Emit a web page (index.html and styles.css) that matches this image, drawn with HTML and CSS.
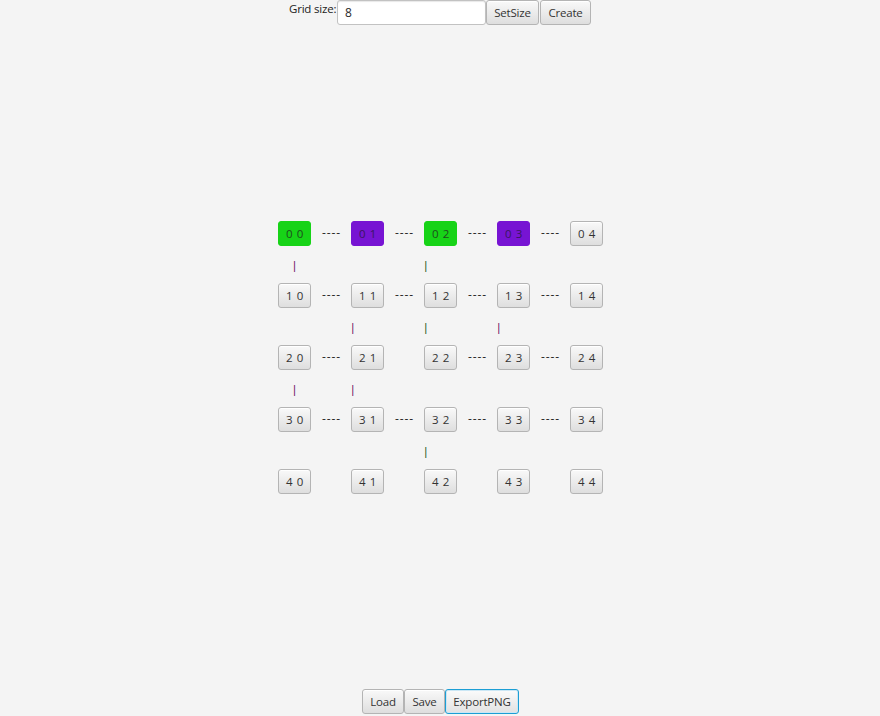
FILE: index.html
```html
<!DOCTYPE html>
<html>
<head>
<meta charset="utf-8">
<link rel="stylesheet" href="styles.css">
</head>
<body>
<div class="app">
  <div class="topbar">
    <span class="lbl">Grid size:</span>
    <div class="field">8</div>
    <button class="btn setsize">SetSize</button>
    <button class="btn create">Create</button>
  </div>
  <div class="center">
    <div class="board">
      <!-- row 0 -->
      <button class="btn cell green">0 0</button><span class="dash">----</span>
      <button class="btn cell purple">0 1</button><span class="dash">----</span>
      <button class="btn cell green">0 2</button><span class="dash">----</span>
      <button class="btn cell purple">0 3</button><span class="dash">----</span>
      <button class="btn cell">0 4</button>
      <!-- bars 0-1 -->
      <span class="bar first pur">|</span><span></span>
      <span></span><span></span>
      <span class="bar grn">|</span><span></span>
      <span></span><span></span>
      <span></span>
      <!-- row 1 -->
      <button class="btn cell">1 0</button><span class="dash">----</span>
      <button class="btn cell">1 1</button><span class="dash">----</span>
      <button class="btn cell">1 2</button><span class="dash">----</span>
      <button class="btn cell">1 3</button><span class="dash">----</span>
      <button class="btn cell">1 4</button>
      <!-- bars 1-2 -->
      <span></span><span></span>
      <span class="bar pur">|</span><span></span>
      <span class="bar grn">|</span><span></span>
      <span class="bar pur">|</span><span></span>
      <span></span>
      <!-- row 2 -->
      <button class="btn cell">2 0</button><span class="dash">----</span>
      <button class="btn cell">2 1</button><span></span>
      <button class="btn cell">2 2</button><span class="dash">----</span>
      <button class="btn cell">2 3</button><span class="dash">----</span>
      <button class="btn cell">2 4</button>
      <!-- bars 2-3 -->
      <span class="bar first pur">|</span><span></span>
      <span class="bar pur">|</span><span></span>
      <span></span><span></span>
      <span></span><span></span>
      <span></span>
      <!-- row 3 -->
      <button class="btn cell">3 0</button><span class="dash">----</span>
      <button class="btn cell">3 1</button><span class="dash">----</span>
      <button class="btn cell">3 2</button><span class="dash">----</span>
      <button class="btn cell">3 3</button><span class="dash">----</span>
      <button class="btn cell">3 4</button>
      <!-- bars 3-4 -->
      <span></span><span></span>
      <span></span><span></span>
      <span class="bar grn">|</span><span></span>
      <span></span><span></span>
      <span></span>
      <!-- row 4 -->
      <button class="btn cell">4 0</button><span></span>
      <button class="btn cell">4 1</button><span></span>
      <button class="btn cell">4 2</button><span></span>
      <button class="btn cell">4 3</button><span></span>
      <button class="btn cell">4 4</button>
    </div>
  </div>
  <div class="bottombar">
    <button class="btn load">Load</button>
    <button class="btn save">Save</button>
    <button class="btn export focused">ExportPNG</button>
  </div>
</div>
</body>
</html>
```
FILE: styles.css
```css
html, body {
  margin: 0;
  padding: 0;
  background: #f4f4f4;
}
.app {
  width: 880px;
  height: 716px;
  display: flex;
  flex-direction: column;
  font-family: "Open Sans", "Noto Sans", sans-serif;
  font-size: 12px;
  color: #333;
}
.topbar {
  height: 25px;
  display: flex;
  justify-content: center;
  align-items: flex-start;
}
.lbl {
  display: block;
  width: 48px;
  line-height: 15px;
  padding-top: 1px;
  font-size: 11.5px;
  color: #222;
  white-space: nowrap;
  letter-spacing: -0.2px;
}
.field {
  box-sizing: border-box;
  width: 149px;
  height: 25px;
  background: #fff;
  border: 1px solid #c2c2c2;
  border-radius: 3px;
  box-shadow: inset 0 1px 1px #e8e8e8;
  padding-left: 7px;
  line-height: 23px;
  font-size: 12px;
  color: #2a2a2a;
}
.btn {
  box-sizing: border-box;
  margin: 0;
  padding: 0;
  height: 25px;
  background: linear-gradient(#f9f9f9, #dedede);
  border: 1px solid #b4b4b4;
  border-radius: 3px;
  box-shadow: inset 0 1px 0 #ffffff;
  font-family: "Open Sans", "Noto Sans", sans-serif;
  font-size: 11.5px;
  color: #333;
  line-height: 23px;
  text-align: center;
  letter-spacing: -0.2px;
  white-space: nowrap;
}
.setsize { width: 53px; }
.create { width: 51px; margin-left: 1px; }
.center {
  flex: 1;
  display: flex;
  align-items: center;
  justify-content: center;
  padding-left: 1px;
}
.board {
  display: grid;
  grid-template-columns: 33px 40px 33px 40px 33px 40px 33px 40px 33px;
  grid-template-rows: 25px 37px 25px 37px 25px 37px 25px 37px 25px;
}
.cell {
  width: 33px;
  letter-spacing: 0.6px;
  padding-left: 1px;
  font-size: 11.5px;
}
.cell.green {
  background: #17d317;
  border-color: #17d317;
  box-shadow: none;
  color: #1e4d1e;
}
.cell.purple {
  background: #7714d3;
  border-color: #7714d3;
  box-shadow: none;
  color: #3a1660;
}
.dash {
  align-self: center;
  justify-self: center;
  font-size: 12px;
  line-height: 12px;
  color: #2b2b2b;
  letter-spacing: 0.9px;
  padding-left: 1px;
}
.bar {
  align-self: center;
  justify-self: start;
  margin-left: -1px;
  font-size: 10px;
  line-height: 12px;
  margin-top: 1px;
  font-weight: 600;
}
.bar.first {
  justify-self: center;
  margin-left: 0;
}
.pur { color: #6e1263; }
.grn { color: #235a23; }
.bottombar {
  display: flex;
  justify-content: center;
  padding-bottom: 2px;
  padding-left: 1px;
}
.load { width: 42px; }
.save { width: 41px; }
.export { width: 74px; }
.focused {
  border-color: #1c9ed4;
  box-shadow: inset 0 0 0 1px #cbe7f5;
  background: linear-gradient(#fbfbfb, #e2e2e2);
}
```
